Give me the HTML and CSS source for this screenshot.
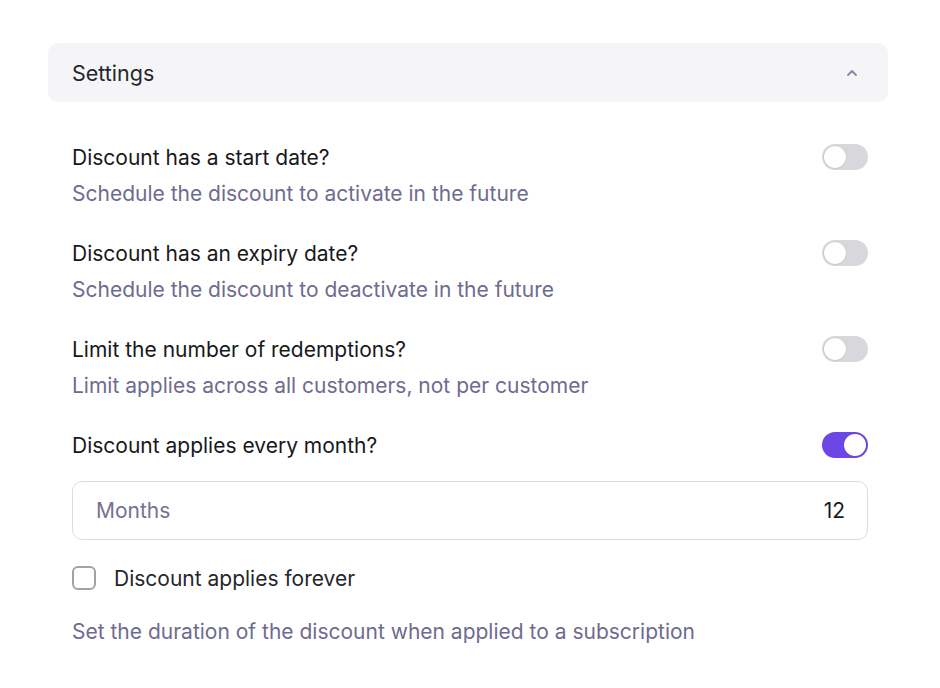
FILE: index.html
```html
<!DOCTYPE html>
<html>
<head>
<meta charset="utf-8">
<link rel="stylesheet" href="styles.css">
</head>
<body>
<div class="panel">
  <div class="header">
    <span class="header-title">Settings</span>
    <svg class="chevron" width="14" height="14" viewBox="0 0 14 14"><path d="M3 9 L7 5 L11 9" fill="none" stroke="#8a87a3" stroke-width="1.8" stroke-linecap="round" stroke-linejoin="round"/></svg>
  </div>
  <div class="body">
    <div class="row">
      <div class="text">
        <div class="label">Discount has a start date?</div>
        <div class="desc">Schedule the discount to activate in the future</div>
      </div>
      <span class="toggle"><span class="knob"></span></span>
    </div>
    <div class="row">
      <div class="text">
        <div class="label">Discount has an expiry date?</div>
        <div class="desc">Schedule the discount to deactivate in the future</div>
      </div>
      <span class="toggle"><span class="knob"></span></span>
    </div>
    <div class="row">
      <div class="text">
        <div class="label">Limit the number of redemptions?</div>
        <div class="desc">Limit applies across all customers, not per customer</div>
      </div>
      <span class="toggle"><span class="knob"></span></span>
    </div>
    <div class="row row-on">
      <div class="text">
        <div class="label">Discount applies every month?</div>
      </div>
      <span class="toggle on"><span class="knob"></span></span>
    </div>
    <div class="input">
      <span class="placeholder">Months</span>
      <span class="value">12</span>
    </div>
    <label class="check">
      <span class="box"></span>
      <span class="check-label">Discount applies forever</span>
    </label>
    <div class="desc final">Set the duration of the discount when applied to a subscription</div>
  </div>
</div>
</body>
</html>
```

FILE: styles.css
```css
* { box-sizing: border-box; }
html, body { margin: 0; padding: 0; background: #ffffff; }
body {
  font-family: Inter, "Noto Sans", sans-serif;
  color: #18181b;
  width: 940px;
  height: 688px;
  overflow: hidden;
}
.panel {
  margin: 43px 52px 0 48px;
}
.header {
  height: 59px;
  background: #f5f5f7;
  border-radius: 10px;
  display: flex;
  align-items: center;
  justify-content: space-between;
  padding: 0 29px 0 24px;
}
.header-title {
  font-size: 21.5px;
  color: #26262b;
  margin-top: 1px;
}
.chevron { display: block; }
.body {
  padding: 41px 20px 0 24px;
  display: flex;
  flex-direction: column;
}
.row {
  display: flex;
  justify-content: space-between;
  align-items: flex-start;
  height: 96px;
}
.row-on { height: 50px; }
.label {
  font-size: 21px;
  line-height: 30px;
  color: #18181b;
}
.desc {
  font-size: 21px;
  line-height: 30px;
  margin-top: 6px;
  color: #6e6b8f;
}
.toggle {
  width: 46px;
  height: 26px;
  border-radius: 13px;
  background: #d8d8dc;
  margin-top: 1px;
  padding: 2px;
  display: flex;
}
.toggle .knob {
  width: 22px;
  height: 22px;
  border-radius: 50%;
  background: #fff;
  box-shadow: 0 0 0 0.5px rgba(0,0,0,0.12);
}
.toggle.on {
  background: #6c47e6;
  justify-content: flex-end;
}
.input {
  height: 59px;
  border: 1.5px solid #dcdce0;
  border-radius: 10px;
  display: flex;
  align-items: center;
  justify-content: space-between;
  padding: 0 22px 0 23px;
  font-size: 21px;
}
.placeholder { color: #75728f; }
.value { color: #1a1a1e; }
.check {
  display: flex;
  align-items: center;
  margin-top: 25px;
  height: 26px;
}
.box {
  width: 24px;
  height: 24px;
  border: 2px solid #a1a1a8;
  border-radius: 6px;
  margin-right: 18px;
}
.check-label {
  font-size: 21px;
  color: #26262b;
}
.desc.final {
  margin-top: 26px;
}
```
